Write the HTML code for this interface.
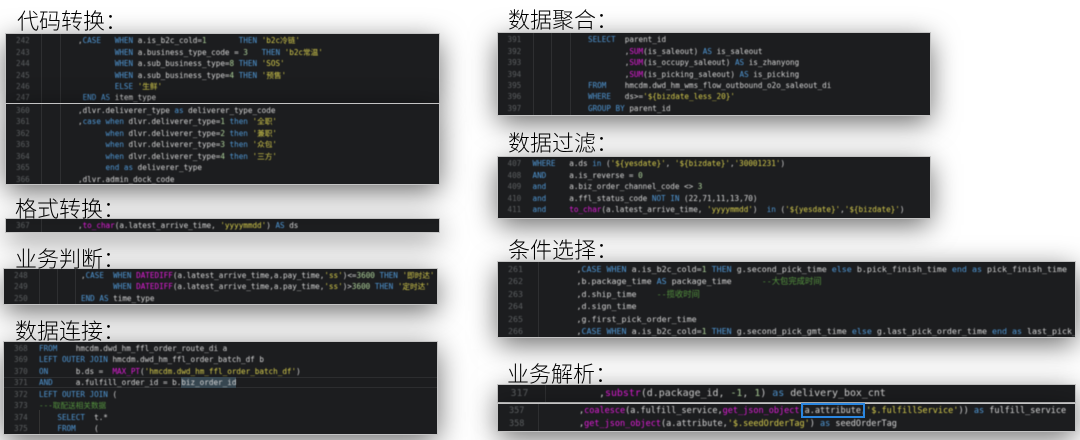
<!DOCTYPE html>
<html lang="zh"><head><meta charset="utf-8"><title>SQL</title>
<style>
html,body{margin:0;padding:0;background:#fff}
body{width:1080px;height:440px;position:relative;overflow:hidden}
.t{position:absolute;z-index:5;margin-top:2px;font:300 22px/30px "Liberation Sans","Noto Sans CJK SC",sans-serif;color:#000;white-space:pre;filter:blur(.3px)}
.p{position:absolute;background:#1c1d1f;box-shadow:0 0 0 1px #c4c4c4,0 7px 28px rgba(0,0,0,.6);overflow:hidden}
pre{position:absolute;margin:.4px 0 0;font-family:"DejaVu Sans Mono","Noto Sans CJK SC",monospace;font-size:7.64px;line-height:11.43px;color:#d6d6d6;filter:blur(.4px)}
pre.l{color:#5c5f61}
.g{position:absolute;top:0;bottom:0;width:1px;background:#2e2f31}
.k{color:#5098d6}.s{color:#d6cc4c}.f{color:#e01cd8}.n{color:#b0d49c}.c{color:#55943f}
</style></head><body>

<div class="t" style="left:17px;top:5px">代码转换：</div>
<div class="p" style="left:6px;top:34px;width:433px;height:68.5px;z-index:2">
<i class="g" style="left:35px"></i><i class="g" style="left:54px"></i>
<pre class="l" style="left:10px;top:.8px">242
243
244
245
246
247</pre>
<pre style="left:72px;top:.8px">,<span class="k">CASE</span>   <span class="k">WHEN</span> a.is_b2c_cold=<span class="n">1</span>       <span class="k">THEN</span> <span class="s">'b2c冷链'</span>
        <span class="k">WHEN</span> a.business_type_code = <span class="n">3</span>   <span class="k">THEN</span> <span class="s">'b2c常温'</span>
        <span class="k">WHEN</span> a.sub_business_type=<span class="n">8</span> <span class="k">THEN</span> <span class="s">'SOS'</span>
        <span class="k">WHEN</span> a.sub_business_type=<span class="n">4</span> <span class="k">THEN</span> <span class="s">'预售'</span>
        <span class="k">ELSE</span> <span class="s">'生鲜'</span>
 <span class="k">END AS</span> item_type</pre>
</div>
<div class="p" style="left:6px;top:104px;width:433px;height:80px;z-index:2">
<i class="g" style="left:35px"></i><i class="g" style="left:54px"></i>
<pre class="l" style="left:10px;top:.6px">360
361
362
363
364
365
366</pre>
<pre style="left:72px;top:.6px">,dlvr.deliverer_type <span class="k">as</span> deliverer_type_code
,<span class="k">case when</span> dlvr.deliverer_type=<span class="n">1</span> <span class="k">then</span> <span class="s">'全职'</span>
      <span class="k">when</span> dlvr.deliverer_type=<span class="n">2</span> <span class="k">then</span> <span class="s">'兼职'</span>
      <span class="k">when</span> dlvr.deliverer_type=<span class="n">3</span> <span class="k">then</span> <span class="s">'众包'</span>
      <span class="k">when</span> dlvr.deliverer_type=<span class="n">4</span> <span class="k">then</span> <span class="s">'三方'</span>
      <span class="k">end as</span> deliverer_type
,dlvr.admin_dock_code</pre>
</div>

<div class="t" style="left:15px;top:193px">格式转换：</div>
<div class="p" style="left:6px;top:219px;width:433px;height:13px">
<i class="g" style="left:35px"></i>
<pre class="l" style="left:10px;top:.6px">367</pre>
<pre style="left:72px;top:.6px">,<span class="f">to_char</span>(a.latest_arrive_time, <span class="s">'yyyymmdd'</span>) <span class="k">AS</span> ds</pre>
</div>

<div class="t" style="left:15px;top:243px">业务判断：</div>
<div class="p" style="left:4px;top:269px;width:433px;height:35px">
<i class="g" style="left:35px"></i><i class="g" style="left:53px"></i><i class="g" style="left:71px"></i>
<pre class="l" style="left:10px;top:.3px">248
249
250</pre>
<pre style="left:77px;top:.3px">,<span class="k">CASE</span>  <span class="k">WHEN</span> <span class="f">DATEDIFF</span>(a.latest_arrive_time,a.pay_time,<span class="s">'ss'</span>)&lt;=<span class="n">3600</span> <span class="k">THEN</span> <span class="s">'即时达'</span>
       <span class="k">WHEN</span> <span class="f">DATEDIFF</span>(a.latest_arrive_time,a.pay_time,<span class="s">'ss'</span>)&gt;<span class="n">3600</span> <span class="k">THEN</span> <span class="s">'定时达'</span>
<span class="k">END AS</span> time_type</pre>
</div>

<div class="t" style="left:15px;top:315px">数据连接：</div>
<div class="p" style="left:4px;top:342px;width:433px;height:91.5px">
<i style="position:absolute;left:0;right:0;top:35px;height:11.4px;border-top:1px solid #2c2d2f;border-bottom:1px solid #2c2d2f;box-sizing:border-box"></i>
<i style="position:absolute;left:177px;top:35px;width:55px;height:11px;background:#364650"></i>
<i class="g" style="left:35px;top:68px;background:#333"></i>
<pre class="l" style="left:10px;top:.5px">368
369
370
371
372
373
374
375</pre>
<pre style="left:35px;top:.5px"><span class="k">FROM</span>    hmcdm.dwd_hm_ffl_order_route_di a
<span class="k">LEFT OUTER JOIN</span> hmcdm.dwd_hm_ffl_order_batch_df b
<span class="k">ON</span>      b.ds =  <span class="f">MAX_PT</span>(<span class="s">'hmcdm.dwd_hm_ffl_order_batch_df'</span>)
<span class="k">AND</span>     a.fulfill_order_id = b.biz_order_id
<span class="k">LEFT OUTER JOIN</span> (
<span class="c">---取配送相关数据</span>
    <span class="k">SELECT</span>  t.*
    <span class="k">FROM</span>    (</pre>
</div>

<div class="t" style="left:508px;top:4px">数据聚合：</div>
<div class="p" style="left:497.5px;top:33px;width:432.5px;height:82px">
<i class="g" style="left:35px"></i><i class="g" style="left:53.5px"></i><i class="g" style="left:72px"></i>
<pre class="l" style="left:10px;top:.8px">391
392
393
394
395
396
397</pre>
<pre style="left:90.5px;top:.8px"><span class="k">SELECT</span>  parent_id
        ,<span class="f">SUM</span>(is_saleout) <span class="k">AS</span> is_saleout
        ,<span class="f">SUM</span>(is_occupy_saleout) <span class="k">AS</span> is_zhanyong
        ,<span class="f">SUM</span>(is_picking_saleout) <span class="k">AS</span> is_picking
<span class="k">FROM</span>    hmcdm.dwd_hm_wms_flow_outbound_o2o_saleout_di
<span class="k">WHERE</span>   ds&gt;=<span class="s">'${bizdate_less_20}'</span>
<span class="k">GROUP BY</span> parent_id</pre>
</div>

<div class="t" style="left:508px;top:127px">数据过滤：</div>
<div class="p" style="left:497.5px;top:157px;width:432.5px;height:61px">
<pre class="l" style="left:10px;top:.8px">407
408
409
410
411</pre>
<pre style="left:35px;top:.8px"><span class="k">WHERE</span>   a.ds <span class="k">in</span> (<span class="s">'${yesdate}'</span>, <span class="s">'${bizdate}'</span>,<span class="s">'30001231'</span>)
<span class="k">AND</span>     a.is_reverse = <span class="n">0</span>
<span class="k">and</span>     a.biz_order_channel_code &lt;&gt; <span class="n">3</span>
<span class="k">and</span>     a.ffl_status_code <span class="k">NOT IN</span> (22,71,11,13,70)
<span class="k">and</span>     <span class="f">to_char</span>(a.latest_arrive_time, <span class="s">'yyyymmdd'</span>)  <span class="k">in</span> (<span class="s">'${yesdate}'</span>,<span class="s">'${bizdate}'</span>)</pre>
</div>

<div class="t" style="left:508px;top:234px">条件选择：</div>
<div class="p" style="left:497.5px;top:262px;width:577px;height:75px">
<i class="g" style="left:40px"></i>
<pre class="l" style="left:10.5px;top:.4px;font-size:8.32px;line-height:12.47px">261
262
263
264
265
266</pre>
<pre style="left:79px;top:.4px;font-size:8.32px;line-height:12.47px">,<span class="k">CASE WHEN</span> a.is_b2c_cold=<span class="n">1</span> <span class="k">THEN</span> g.second_pick_time <span class="k">else</span> b.pick_finish_time <span class="k">end as</span> pick_finish_time
,b.package_time <span class="k">AS</span> package_time      <span class="c">--大包完成时间</span>
,d.ship_time    <span class="c">--揽收时间</span>
,d.sign_time
,g.first_pick_order_time
,<span class="k">CASE WHEN</span> a.is_b2c_cold=<span class="n">1</span> <span class="k">THEN</span> g.second_pick_gmt_time <span class="k">else</span> g.last_pick_order_time <span class="k">end as</span> last_pick_</pre>
</div>

<div class="t" style="left:507px;top:358px">业务解析：</div>
<div class="p" style="left:497.5px;top:385px;width:577px;height:16.7px">
<i class="g" style="left:47px"></i>
<pre class="l" style="left:13px;top:.6px;font-size:9.93px;line-height:16.7px">317</pre>
<pre style="left:101.5px;top:.6px;font-size:9.93px;line-height:16.7px">,<span class="f">substr</span>(d.package_id, <span class="n">-1</span>, <span class="n">1</span>) <span class="k">as</span> delivery_box_cnt</pre>
</div>
<div class="p" style="left:497.5px;top:404px;width:577px;height:26.7px">
<i class="g" style="left:40.5px"></i>
<pre class="l" style="left:11.5px;top:1.1px;font-size:8.52px;line-height:12.67px">357
358</pre>
<pre style="left:81.5px;top:1.1px;font-size:8.52px;line-height:12.67px">,<span class="f">coalesce</span>(a.fulfill_service,<span class="f">get_json_object</span>(a.attribute,<span class="s">'$.fulfillService'</span>)) <span class="k">as</span> fulfill_service
,<span class="f">get_json_object</span>(a.attribute,<span class="s">'$.seedOrderTag'</span>) <span class="k">as</span> seedOrderTag</pre>
</div>
<div style="position:absolute;left:801px;top:402.7px;width:60px;height:11.5px;border:2px solid #2a86e0"></div>

</body></html>
